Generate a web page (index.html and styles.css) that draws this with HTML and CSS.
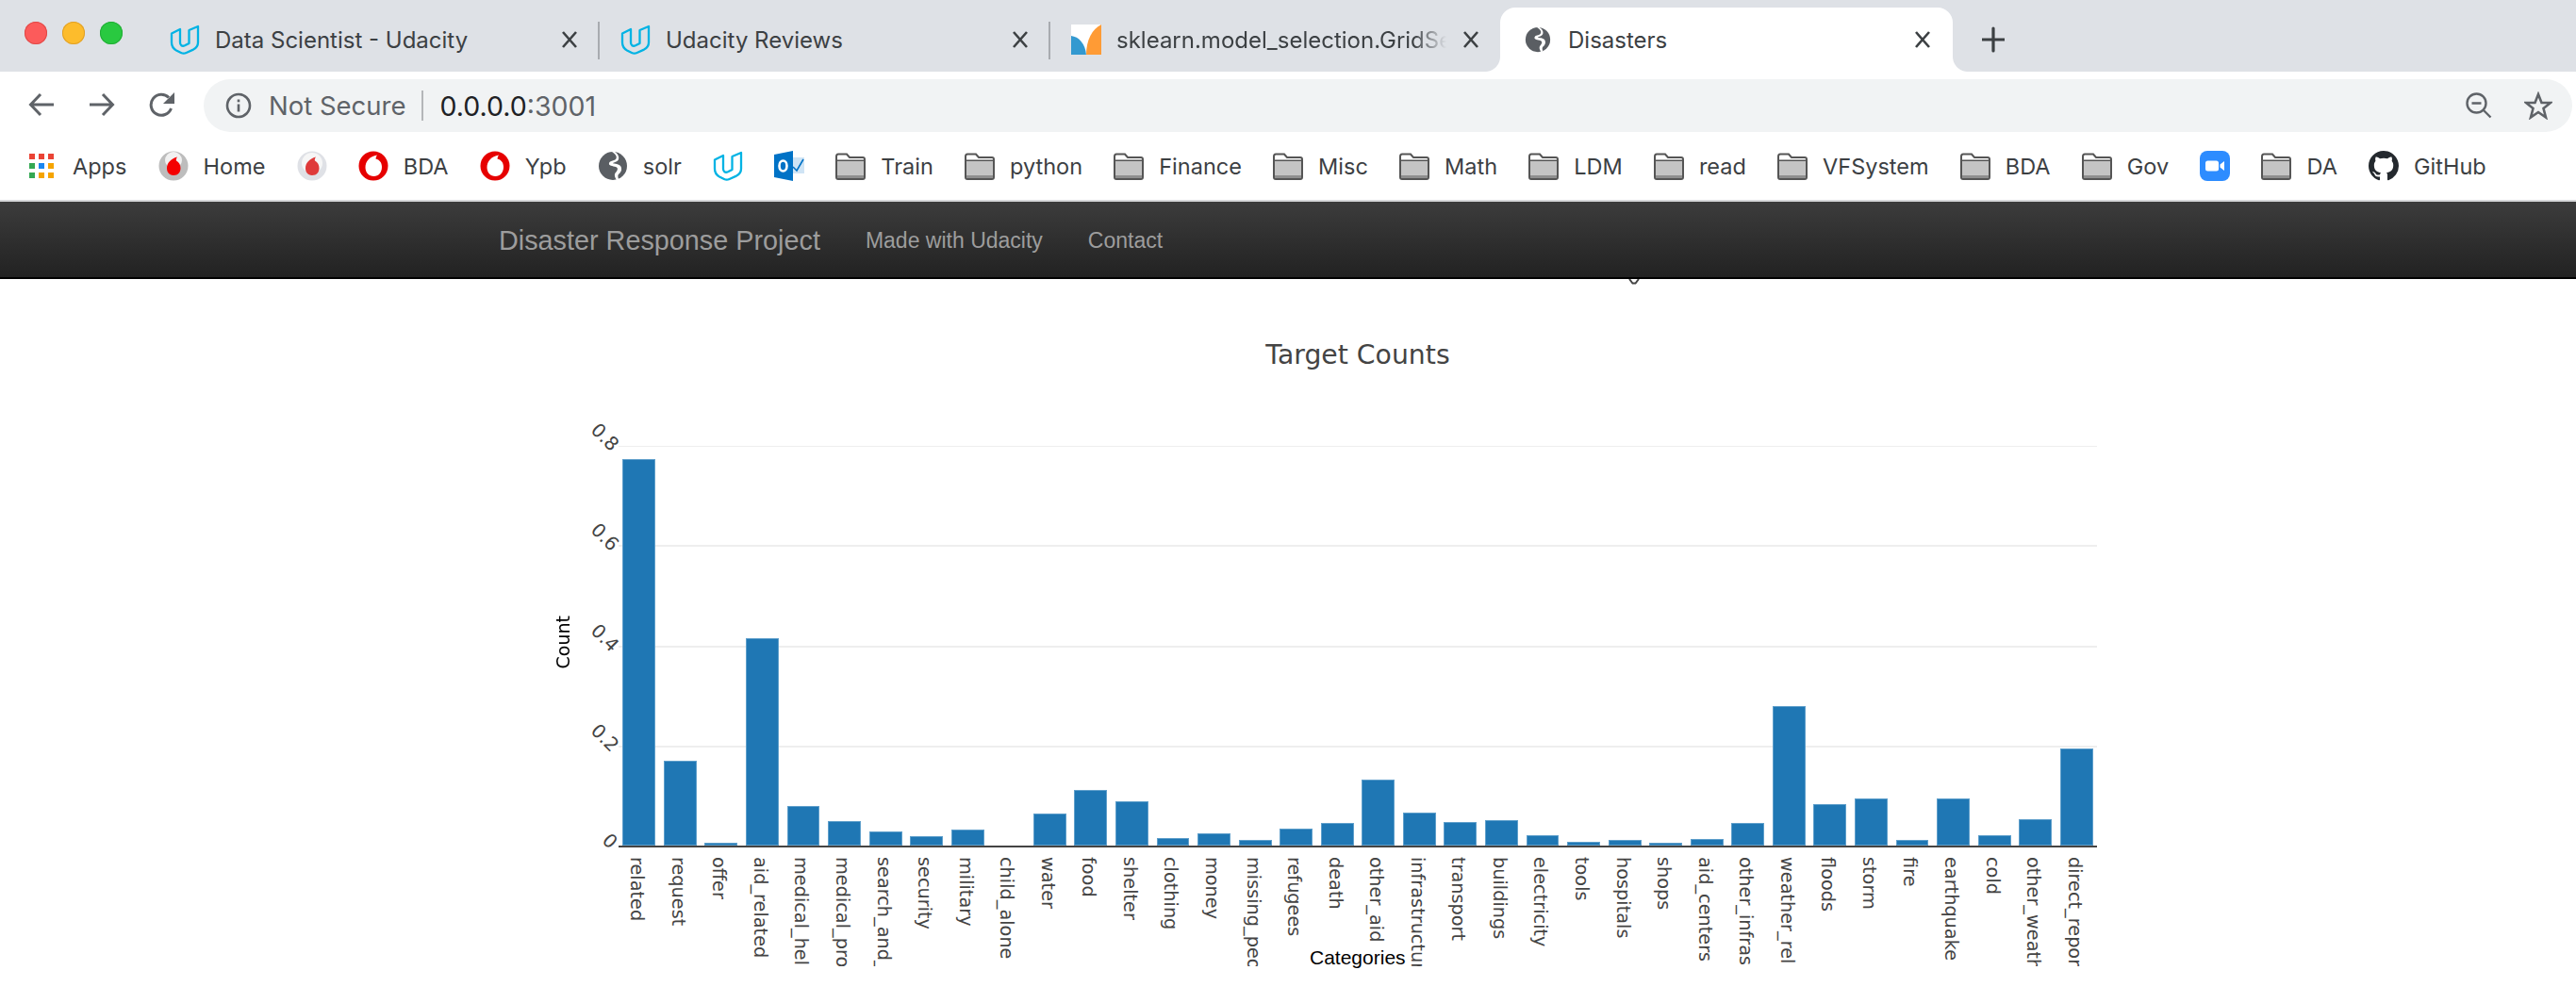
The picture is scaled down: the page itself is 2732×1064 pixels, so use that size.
FILE: index.html
```html
<!DOCTYPE html>
<html lang="en">
<head>
<meta charset="utf-8">
<title>Disasters</title>
<link rel="stylesheet" href="styles.css">
</head>
<body>
<svg class="defs" width="0" height="0" aria-hidden="true">
  <symbol id="udacity" viewBox="0 0 32 32">
    <path d="M2 9.500 11 5V19C11 22 13 23.500 16 22.300L20.500 20V6L30 2V19C30 23 28 25 25 26.600L17.500 30C15.500 31 14 31 12 30L7 27.500C3.500 25.500 2 23 2 19Z" fill="none" stroke="#02b3e4" stroke-width="2.300" stroke-linejoin="round"/>
  </symbol>
  <symbol id="globe" viewBox="0 0 32 32">
    <circle cx="16" cy="16" r="15" fill="#5a5e63"/>
    <path d="M15 1C19 4 21 6 19 9 17 11 13 10 12 13 11 16 16 16 19 17 22 18 21 21 19 23 17 25 18 28 20 31L22 30C21 27 21 25 23 24 25 22 26 19 24 16 21 13 16 14 16 13 17 12 21 12 22 9 23 6 21 3 18 1Z" fill="#fff"/>
  </symbol>
  <symbol id="folder" viewBox="0 0 32 32">
    <path d="M1 6C1 4 1.500 3.500 3 3.500H12L15 7H29C30.500 7 31 7.500 31 9V28C31 29.500 30.500 30 29 30H3C1.500 30 1 29.500 1 28Z" fill="#fff" stroke="#555" stroke-width="2"/>
    <rect x="2" y="11" width="28" height="15" fill="#c4c4c4"/>
    <rect x="2" y="26" width="28" height="3" fill="#8e8e8e"/>
    <rect x="2" y="9.500" width="28" height="1.500" fill="#555"/>
  </symbol>
  <symbol id="voda-red" viewBox="0 0 32 32">
    <circle cx="16" cy="16" r="15.500" fill="#e60000"/>
    <path d="M16.500 27C11 27 7.500 23 7.500 17.500 7.500 11 12 6 20 4.500 19 6 18.500 7.500 18.500 8.500 22.500 9.500 25 12.500 25 17 25 23 21.500 27 16.500 27Z" fill="#fff"/>
  </symbol>
  <symbol id="voda-grey" viewBox="0 0 32 32">
    <circle cx="16" cy="16" r="15.500" fill="#bdbdbd"/>
    <circle cx="16" cy="10" r="9" fill="#f1f1f1"/>
    <path d="M16 26C11 26 9 22 9 18.500 9 13 13 8.500 20 6.500 19 8 18.500 9.500 19 10.500 22 12 23.500 15 23.500 18.500 23.500 22.500 21 26 16 26Z" fill="#f40000"/>
  </symbol>
  <symbol id="voda-pale" viewBox="0 0 32 32">
    <circle cx="16" cy="16" r="15.500" fill="#dfe1e6"/>
    <circle cx="16" cy="13" r="11" fill="#f6f6f6"/>
    <path d="M16 26C11 26 9 22 9 18.500 9 13 13 8.500 20 6.500 19 8 18.500 9.500 19 10.500 22 12 23.500 15 23.500 18.500 23.500 22.500 21 26 16 26Z" fill="#df3a3a"/>
  </symbol>
  <symbol id="close" viewBox="0 0 20 20">
    <path d="M3 2 17 18M17 2 3 18" stroke="#3c4043" stroke-width="2.600" fill="none"/>
  </symbol>
</svg>

<header class="chrome">
  <div class="tabstrip">
    <div class="lights">
      <span class="light light-red"></span>
      <span class="light light-yellow"></span>
      <span class="light light-green"></span>
    </div>
    <div class="tab tab-sep">
      <svg class="favicon"><use href="#udacity"/></svg>
      <span class="tab-title">Data Scientist - Udacity</span>
      <svg class="tab-close"><use href="#close"/></svg>
    </div>
    <div class="tab tab-sep">
      <svg class="favicon"><use href="#udacity"/></svg>
      <span class="tab-title">Udacity Reviews</span>
      <svg class="tab-close"><use href="#close"/></svg>
    </div>
    <div class="tab">
      <svg class="favicon" viewBox="0 0 32 32">
        <rect width="32" height="32" fill="#fff"/>
        <path d="M32 0V32H16C16 17 22 5 32 0Z" fill="#ff9b35"/>
        <path d="M0 12C8 13 15 20 16 32H0Z" fill="#3399d0"/>
      </svg>
      <span class="tab-title tab-title-fade">sklearn.model_selection.GridSe</span>
      <svg class="tab-close"><use href="#close"/></svg>
    </div>
    <div class="tab tab-active">
      <svg class="favicon favicon-globe"><use href="#globe"/></svg>
      <span class="tab-title">Disasters</span>
      <svg class="tab-close"><use href="#close"/></svg>
    </div>
    <svg class="new-tab" viewBox="0 0 24 24"><path d="M12 0V24M0 12H24" stroke="#3c4043" stroke-width="3.200" stroke-linecap="round"/></svg>
  </div>

  <div class="toolbar">
    <svg class="tool" viewBox="0 0 28 28"><path d="M27 14H3M13 3 2.500 14 13 25" fill="none" stroke="#5f6368" stroke-width="3"/></svg>
    <svg class="tool" viewBox="0 0 28 28"><path d="M1 14H25M15 3 25.500 14 15 25" fill="none" stroke="#5f6368" stroke-width="3"/></svg>
    <svg class="tool" viewBox="0 0 28 28"><path d="M23.500 18A11 11 0 1 1 21 6.500" fill="none" stroke="#5f6368" stroke-width="3"/><path d="M27 1V13H15Z" fill="#5f6368"/></svg>
    <div class="omnibox">
      <svg class="info" viewBox="0 0 28 28"><circle cx="14" cy="14" r="12" fill="none" stroke="#5f6368" stroke-width="2.600"/><rect x="12.700" y="12.500" width="2.600" height="8" fill="#5f6368"/><rect x="12.700" y="7.500" width="2.600" height="2.800" fill="#5f6368"/></svg>
      <span class="secure">Not Secure</span>
      <span class="url"><span class="host">0.0.0.0</span>:3001</span>
      <svg class="omni-icon zoom-out" viewBox="0 0 28 28"><circle cx="11.500" cy="11.500" r="10" fill="none" stroke="#5f6368" stroke-width="2.400"/><path d="M6.500 11.500H16.500M18.500 18.500 26.500 26.500" stroke="#5f6368" stroke-width="2.400" fill="none"/></svg>
      <svg class="omni-icon omni-star" viewBox="0 0 30 30"><path d="M15 3 18.500 12H28L20.500 18 23 27.500 15 22 7 27.500 9.500 18 2 12H11.500Z" fill="none" stroke="#5f6368" stroke-width="2.600"/></svg>
    </div>
  </div>

  <nav class="bookmarks">
    <div class="bm bm-apps">
      <svg class="bm-icon bm-icon-apps" viewBox="0 0 26 26">
        <rect width="6" height="6" fill="#ea4335"/><rect x="10" width="6" height="6" fill="#ea4335"/><rect x="20" width="6" height="6" fill="#ea4335"/>
        <rect y="10" width="6" height="6" fill="#34a853"/><rect x="10" y="10" width="6" height="6" fill="#1a87f0"/><rect x="20" y="10" width="6" height="6" fill="#f5a400"/>
        <rect y="20" width="6" height="6" fill="#34a853"/><rect x="10" y="20" width="6" height="6" fill="#f5a400"/><rect x="20" y="20" width="6" height="6" fill="#f5a400"/>
      </svg><span>Apps</span>
    </div>
    <div class="bm"><svg class="bm-icon"><use href="#voda-grey"/></svg><span>Home</span></div>
    <div class="bm"><svg class="bm-icon"><use href="#voda-pale"/></svg></div>
    <div class="bm"><svg class="bm-icon"><use href="#voda-red"/></svg><span>BDA</span></div>
    <div class="bm"><svg class="bm-icon"><use href="#voda-red"/></svg><span>Ypb</span></div>
    <div class="bm"><svg class="bm-icon"><use href="#globe"/></svg><span>solr</span></div>
    <div class="bm"><svg class="bm-icon"><use href="#udacity"/></svg></div>
    <div class="bm">
      <svg class="bm-icon" viewBox="0 0 32 32">
        <path d="M0 4 20 0V32L0 28Z" fill="#0072c6"/>
        <ellipse cx="9.500" cy="16" rx="4" ry="5.500" fill="none" stroke="#fff" stroke-width="2.600"/>
        <rect x="20" y="7" width="12" height="17" fill="#cfe4f5"/>
        <path d="M20 17 24 21 31 9" fill="none" stroke="#0072c6" stroke-width="1.600"/>
      </svg>
    </div>
    <div class="bm"><svg class="bm-icon"><use href="#folder"/></svg><span>Train</span></div>
    <div class="bm"><svg class="bm-icon"><use href="#folder"/></svg><span>python</span></div>
    <div class="bm"><svg class="bm-icon"><use href="#folder"/></svg><span>Finance</span></div>
    <div class="bm"><svg class="bm-icon"><use href="#folder"/></svg><span>Misc</span></div>
    <div class="bm"><svg class="bm-icon"><use href="#folder"/></svg><span>Math</span></div>
    <div class="bm"><svg class="bm-icon"><use href="#folder"/></svg><span>LDM</span></div>
    <div class="bm"><svg class="bm-icon"><use href="#folder"/></svg><span>read</span></div>
    <div class="bm"><svg class="bm-icon"><use href="#folder"/></svg><span>VFSystem</span></div>
    <div class="bm"><svg class="bm-icon"><use href="#folder"/></svg><span>BDA</span></div>
    <div class="bm"><svg class="bm-icon"><use href="#folder"/></svg><span>Gov</span></div>
    <div class="bm">
      <svg class="bm-icon" viewBox="0 0 32 32">
        <rect width="32" height="32" rx="8" fill="#2d8cff"/>
        <rect x="6" y="10.500" width="14" height="11" rx="2.500" fill="#fff"/>
        <path d="M21.500 14.500 26 11V21L21.500 17.500Z" fill="#fff"/>
      </svg>
    </div>
    <div class="bm"><svg class="bm-icon"><use href="#folder"/></svg><span>DA</span></div>
    <div class="bm">
      <svg class="bm-icon" viewBox="0 0 16 16"><path fill="#24292e" d="M8 0C3.580 0 0 3.580 0 8c0 3.540 2.290 6.530 5.470 7.590.4.070.55-.17.55-.38 0-.19-.01-.82-.01-1.490-2.010.37-2.530-.49-2.690-.94-.09-.23-.48-.94-.82-1.130-.28-.15-.68-.52-.01-.53.63-.01 1.080.58 1.230.82.720 1.210 1.870.87 2.330.66.070-.52.280-.87.510-1.070-1.780-.2-3.640-.89-3.640-3.950 0-.87.310-1.590.820-2.150-.08-.2-.36-1.020.080-2.120 0 0 .67-.21 2.200.82.640-.18 1.320-.27 2-.27.680 0 1.360.09 2 .27 1.530-1.040 2.200-.82 2.200-.82.440 1.100.160 1.920.080 2.120.510.56.820 1.270.820 2.150 0 3.070-1.870 3.750-3.650 3.950.290.25.540.73.540 1.480 0 1.070-.01 1.930-.01 2.200 0 .21.150.46.550.38A8.013 8.013 0 0016 8c0-4.420-3.580-8-8-8z"/></svg><span>GitHub</span>
    </div>
  </nav>
</header>

<nav class="navbar">
  <a class="brand">Disaster Response Project</a>
  <a class="nav-link">Made with Udacity</a>
  <a class="nav-link">Contact</a>
</nav>

<main class="page">
  <svg class="stray" viewBox="0 0 12 7"><path d="M1 0 4.500 4.500H7.500L11 0" fill="none" stroke="#444" stroke-width="2"/></svg>
  <h1 class="chart-title">Target Counts</h1>
  <div class="plot">
    <div class="gridlines">
      <div class="gridline gridline-top"><span class="ytick">0.8</span></div>
      <div class="gridline"><span class="ytick">0.6</span></div>
      <div class="gridline"><span class="ytick">0.4</span></div>
      <div class="gridline"><span class="ytick">0.2</span></div>
      <span class="ytick ytick-zero">0</span>
    </div>
    <div class="bars">
      <div class="bar" style="height:410px"></div>
      <div class="bar" style="height:90.300px"></div>
      <div class="bar" style="height:3.200px"></div>
      <div class="bar" style="height:219.700px"></div>
      <div class="bar" style="height:42.200px"></div>
      <div class="bar" style="height:26.300px"></div>
      <div class="bar" style="height:14.700px"></div>
      <div class="bar" style="height:9.600px"></div>
      <div class="bar" style="height:17.100px"></div>
      <div class="bar bar-empty" style="height:0"></div>
      <div class="bar" style="height:33.800px"></div>
      <div class="bar" style="height:59.300px"></div>
      <div class="bar" style="height:46.600px"></div>
      <div class="bar" style="height:8px"></div>
      <div class="bar" style="height:12.700px"></div>
      <div class="bar" style="height:6px"></div>
      <div class="bar" style="height:18px"></div>
      <div class="bar" style="height:24.300px"></div>
      <div class="bar" style="height:70px"></div>
      <div class="bar" style="height:34.700px"></div>
      <div class="bar" style="height:24.700px"></div>
      <div class="bar" style="height:27px"></div>
      <div class="bar" style="height:11px"></div>
      <div class="bar" style="height:3.700px"></div>
      <div class="bar" style="height:6px"></div>
      <div class="bar" style="height:3.300px"></div>
      <div class="bar" style="height:6.700px"></div>
      <div class="bar" style="height:23.700px"></div>
      <div class="bar" style="height:147.700px"></div>
      <div class="bar" style="height:43.700px"></div>
      <div class="bar" style="height:49.700px"></div>
      <div class="bar" style="height:6px"></div>
      <div class="bar" style="height:49.700px"></div>
      <div class="bar" style="height:10.700px"></div>
      <div class="bar" style="height:28px"></div>
      <div class="bar" style="height:102.700px"></div>
    </div>
    <span class="axis-y-title">Count</span>
  </div>
  <div class="xlabels">
    <span>related</span><span>request</span><span>offer</span><span>aid_related</span><span>medical_hel</span><span>medical_pro</span><span>search_and_</span><span>security</span><span>military</span><span>child_alone</span><span>water</span><span>food</span><span>shelter</span><span>clothing</span><span>money</span><span>missing_peo</span><span>refugees</span><span>death</span><span>other_aid</span><span>infrastructur</span><span>transport</span><span>buildings</span><span>electricity</span><span>tools</span><span>hospitals</span><span>shops</span><span>aid_centers</span><span>other_infras</span><span>weather_rel</span><span>floods</span><span>storm</span><span>fire</span><span>earthquake</span><span>cold</span><span>other_weath</span><span>direct_repor</span>
  </div>
  <span class="axis-x-title">Categories</span>
</main>
</body>
</html>
```

FILE: styles.css
```css
* { box-sizing: border-box; }
html, body { margin: 0; padding: 0; background: #fff; overflow: hidden; }
body { width: 2732px; height: 1064px; font-family: "Inter", "Liberation Sans", sans-serif; }
.defs { position: absolute; }

/* tab strip */
.tabstrip { display: flex; align-items: flex-end; height: 76px; background: #dee1e6; }
.lights { display: flex; gap: 16px; align-self: flex-start; width: 157px; padding: 23px 0 0 26px; }
.light { width: 24px; height: 24px; border-radius: 50%; }
.light-red { background: #fc5b5b; box-shadow: inset 0 0 0 1px #e04a48; }
.light-yellow { background: #fdbc2c; box-shadow: inset 0 0 0 1px #e0a028; }
.light-green { background: #29c940; box-shadow: inset 0 0 0 1px #22ad36; }

.tab { position: relative; display: flex; align-items: center; width: 478px; height: 68px; padding: 0 21px 0 23px; color: #3c4043; font-size: 24px; }
.tab-sep::after { content: ""; position: absolute; right: -1px; top: 15px; width: 2px; height: 40px; background: #a8abb0; }
.favicon { flex: none; width: 32px; height: 32px; margin-right: 16px; }
.tab-title { flex: 1; min-width: 0; white-space: nowrap; overflow: hidden; }
.tab-title-fade { -webkit-mask-image: linear-gradient(90deg, #000 90%, transparent 100%); mask-image: linear-gradient(90deg, #000 90%, transparent 100%); }
.tab-close { flex: none; width: 20px; height: 20px; margin-left: 16px; }
.tab-active { width: 480px; padding: 0 22px 0 26px; background: #fff; border-radius: 16px 16px 0 0; }
.tab-active::before, .tab-active::after { content: ""; position: absolute; bottom: 0; width: 16px; height: 16px; }
.tab-active::before { left: -16px; background: radial-gradient(circle at 0 0, transparent 15.500px, #fff 16.500px); }
.tab-active::after { right: -16px; background: radial-gradient(circle at 100% 0, transparent 15.500px, #fff 16.500px); }
.favicon-globe { width: 28px; height: 32px; margin-right: 18px; }
.new-tab { width: 24px; height: 36px; margin: 0 0 16px 31px; }

/* toolbar */
.toolbar { display: flex; height: 64px; padding: 8px 4px 0 30px; }
.tool { flex: none; width: 28px; height: 28px; margin: 13px 36px 0 0; }
.omnibox { flex: 1; display: flex; align-items: center; height: 56px; margin-left: -6px; padding: 0 21px 0 23px; background: #f1f3f4; border-radius: 28px; font-size: 27.500px; color: #5f6368; }
.info { width: 28px; height: 28px; margin-right: 18px; }
.secure { padding-right: 16px; border-right: 2px solid #b4b6b9; line-height: 32px; }
.url { flex: 1; padding-left: 18px; font-size: 28.500px; }
.host { color: #202124; }
.omni-icon { width: 28px; height: 28px; }
.omni-star { width: 30px; height: 30px; }
.zoom-out { margin-right: 34px; }

/* bookmarks */
.bookmarks { display: flex; align-items: center; gap: 33.200px; height: 72px; padding-left: 31px; font-size: 23.500px; color: #3c4043; }
.bm { display: flex; align-items: center; gap: 16px; white-space: nowrap; }
.bm-icon { width: 32px; height: 32px; flex: none; }
.bm-icon-apps { width: 26px; height: 26px; margin-right: 4px; }

/* site navbar */
.navbar { display: flex; align-items: center; height: 84px; padding: 2px 0 0 529px; border-top: 2px solid #d7d8da; border-bottom: 2px solid #000; background: linear-gradient(#3c3c3c, #222); color: #9d9d9d; font-family: "Liberation Sans", Arial, sans-serif; }
.brand { font-size: 28.800px; margin-right: 48px; }
.nav-link { font-size: 23px; margin-right: 48px; }

/* chart */
.page { position: relative; height: 768px; font-family: "DejaVu Sans", Verdana, sans-serif; color: #444; }
.stray { position: absolute; left: 1727px; top: 0; width: 12px; height: 7px; }
.chart-title { margin: 0; padding: 63px 0 0 148px; height: 177px; text-align: center; font-size: 28.300px; font-weight: 400; line-height: 36px; }
.plot { position: relative; width: 1568px; height: 426px; margin-left: 656px; border-bottom: 2px solid #444; }
.gridlines { position: absolute; inset: 0; display: flex; flex-direction: column; }
.gridline { position: relative; flex: 1; border-top: 2px solid #eee; }
.gridline-top { border-top-width: 1px; }
.ytick { position: absolute; left: -30px; top: -22px; width: 30px; height: 22px; text-align: center; font-size: 20px; line-height: 22px; transform: rotate(45deg); }
.ytick-zero { left: -24px; top: auto; bottom: -6px; }
.bars { position: absolute; inset: 0; display: grid; grid-template-columns: repeat(36, 1fr); align-items: end; justify-items: center; }
.bar { width: 80%; background: #1f77b4; box-shadow: inset 0 0 0 1px #5f9fcb; }
.bar-empty { box-shadow: none; }
.axis-y-title { position: absolute; left: -69px; top: 180px; width: 20px; writing-mode: vertical-rl; transform: rotate(180deg); font-size: 19px; line-height: 20px; color: #000; }
.xlabels { display: grid; grid-template-columns: repeat(36, 1fr); justify-items: center; width: 1568px; height: 126px; margin-left: 656px; padding-top: 10px; overflow: hidden; font-size: 19.300px; line-height: 20px; }
.xlabels > span { padding-right: 5px; writing-mode: vertical-rl; white-space: nowrap; }
.axis-x-title { position: absolute; left: 1389px; top: 710px; font-family: "Liberation Sans", Arial, sans-serif; font-size: 21px; line-height: 20px; color: #000; }
```
